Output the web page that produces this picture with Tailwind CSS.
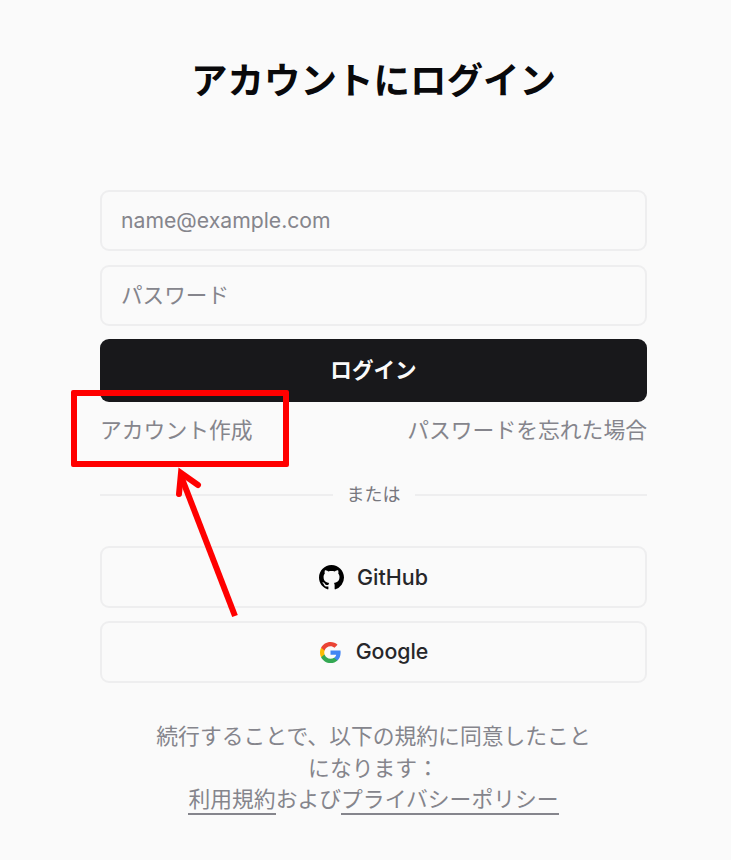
<!DOCTYPE html>
<html lang="ja">
<head>
    <meta charset="UTF-8">
    <meta name="viewport" content="width=device-width, initial-scale=1.0">
    <title>アカウントにログイン</title>
    <script src="https://cdn.jsdelivr.net/npm/@tailwindcss/browser@4"></script>
</head>
<body class="bg-[#fafafa] font-['Inter','Noto_Sans_CJK_JP',sans-serif]">
    <div class="relative w-[731px] h-[860px] overflow-hidden">
        <main class="px-[100px] pt-[58px] w-[747px]">
            <h1 class="text-[36.5px] leading-[46px] font-bold text-[#09090b] text-center">アカウントにログイン</h1>

            <form class="mt-[86px] flex flex-col">
                <div class="h-[61px] border-2 border-[#eeeeef] rounded-[9px] pl-[19px] flex items-center text-[21.2px] text-[#85858c]">name@example.com</div>
                <div class="mt-[14px] h-[61px] border-2 border-[#eeeeef] rounded-[9px] pl-[19px] flex items-center text-[21.6px] text-[#85858c]">パスワード</div>
                <button type="button" class="mt-[13px] h-[63px] bg-[#18181b] text-[#fafafa] rounded-[9px] text-[21.6px] font-semibold">ログイン</button>
            </form>

            <div class="mt-[13px] flex justify-between text-[21.8px] leading-[30px] text-[#85858c]">
                <a>アカウント作成</a>
                <a>パスワードを忘れた場合</a>
            </div>

            <div class="mt-[37px] flex items-center gap-[14px] text-[18px] leading-[26px] text-[#77777e]">
                <div class="flex-1 border-t-2 border-[#eeeeef]"></div>
                <span>または</span>
                <div class="flex-1 border-t-2 border-[#eeeeef]"></div>
            </div>

            <div class="mt-[38px] flex flex-col gap-[13px]">
                <button type="button" class="h-[62px] border-2 border-[#eeeeef] rounded-[9px] flex items-center justify-center gap-[13px] text-[21.5px] font-medium text-[#27272a]">
                    <svg class="w-[25px] h-[25px]" viewBox="0 0 16 16" fill="#000"><path d="M8 0C3.58 0 0 3.58 0 8c0 3.54 2.29 6.53 5.47 7.59.4.07.55-.17.55-.38 0-.19-.01-.82-.01-1.49-2.01.37-2.53-.49-2.69-.94-.09-.23-.48-.94-.82-1.13-.28-.15-.68-.52-.01-.53.63-.01 1.08.58 1.23.82.72 1.21 1.87.87 2.33.66.07-.52.28-.87.51-1.07-1.78-.2-3.64-.89-3.64-3.95 0-.87.31-1.59.82-2.15-.08-.2-.36-1.02.08-2.12 0 0 .67-.21 2.2.82.64-.18 1.32-.27 2-.27s1.36.09 2 .27c1.53-1.04 2.2-.82 2.2-.82.44 1.1.16 1.92.08 2.12.51.56.82 1.27.82 2.15 0 3.07-1.87 3.75-3.65 3.95.29.25.54.73.54 1.48 0 1.07-.01 1.93-.01 2.2 0 .21.15.46.55.38A8.01 8.01 0 0 0 16 8c0-4.42-3.58-8-8-8z"/></svg>
                    GitHub
                </button>
                <button type="button" class="h-[62px] border-2 border-[#eeeeef] rounded-[9px] flex items-center justify-center gap-[14px] text-[21.3px] font-medium text-[#27272a]">
                    <svg class="w-[23px] h-[23px]" viewBox="0 0 24 24">
                        <path fill="#4285F4" d="M22.56 12.25c0-.78-.07-1.53-.2-2.25H12v4.26h5.92c-.26 1.37-1.04 2.53-2.21 3.31v2.77h3.57c2.08-1.92 3.28-4.74 3.28-8.09z"/>
                        <path fill="#34A853" d="M12 23c2.97 0 5.46-.98 7.28-2.66l-3.57-2.77c-.98.66-2.23 1.06-3.71 1.06-2.86 0-5.29-1.93-6.16-4.53H2.18v2.84C3.99 20.53 7.7 23 12 23z"/>
                        <path fill="#FBBC05" d="M5.84 14.09c-.22-.66-.35-1.36-.35-2.09s.13-1.43.35-2.09V7.07H2.18C1.43 8.55 1 10.22 1 12s.43 3.45 1.18 4.93l2.85-2.22.81-.62z"/>
                        <path fill="#EA4335" d="M12 5.38c1.62 0 3.06.56 4.21 1.64l3.15-3.15C17.45 2.09 14.97 1 12 1 7.7 1 3.99 3.47 2.18 7.07l3.66 2.84c.87-2.6 3.3-4.53 6.16-4.53z"/>
                    </svg>
                    Google
                </button>
            </div>

            <p class="mt-[38px] mx-auto w-[440px] text-center text-[21.8px] leading-[31.5px] text-[#85858c]">
                続行することで、以下の規約に同意したことになります：<br>
                <a class="border-b-2 border-[#85858c] pb-[1px]">利用規約</a>および<a class="border-b-2 border-[#85858c] pb-[1px]">プライバシーポリシー</a>
            </p>
        </main>

        <!-- annotation over the screenshot -->
        <div class="absolute left-[71px] top-[390px] w-[218px] h-[77px] border-[6px] border-[#ff0000] rounded-[2px]"></div>
        <svg class="absolute left-0 top-0 w-[731px] h-[860px] pointer-events-none" viewBox="0 0 731 860" fill="none" stroke="#ff0000" stroke-width="6">
            <path d="M235 616 L181 476"/>
            <path d="M179 494 L181 473 L198 485" stroke-linecap="round" stroke-linejoin="miter"/>
        </svg>
    </div>
</body>
</html>
